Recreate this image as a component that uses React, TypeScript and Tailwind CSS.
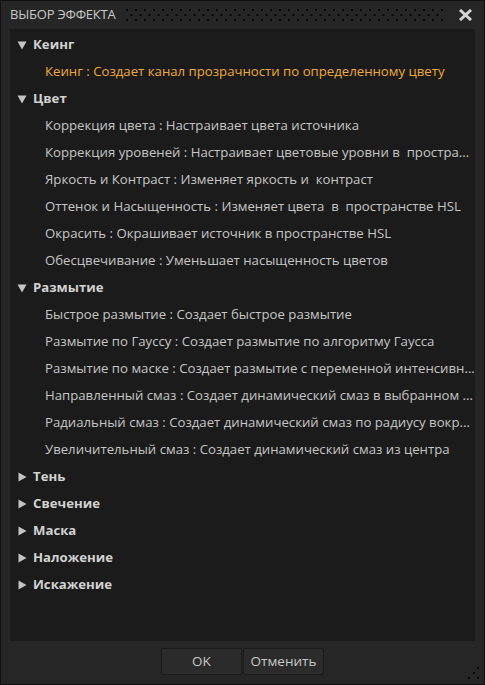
import React from "react";

type Cat = { name: string; open: boolean; items: string[] };

const cats: Cat[] = [
  { name: "Кеинг", open: true, items: ["Кеинг : Создает канал прозрачности по определенному цвету"] },
  {
    name: "Цвет",
    open: true,
    items: [
      "Коррекция цвета : Настраивает цвета источника",
      "Коррекция уровеней : Настраивает цветовые уровни в  простра...",
      "Яркость и Контраст : Изменяет яркость и  контраст",
      "Оттенок и Насыщенность : Изменяет цвета  в  пространстве HSL",
      "Окрасить : Окрашивает источник в пространстве HSL",
      "Обесцвечивание : Уменьшает насыщенность цветов",
    ],
  },
  {
    name: "Размытие",
    open: true,
    items: [
      "Быстрое размытие : Создает быстрое размытие",
      "Размытие по Гауссу : Создает размытие по алгоритму Гаусса",
      "Размытие по маске : Создает размытие с переменной интенсивн...",
      "Направленный смаз : Создает динамический смаз в выбранном ...",
      "Радиальный смаз : Создает динамический смаз по радиусу вокр...",
      "Увеличительный смаз : Создает динамический смаз из центра",
    ],
  },
  { name: "Тень", open: false, items: [] },
  { name: "Свечение", open: false, items: [] },
  { name: "Маска", open: false, items: [] },
  { name: "Наложение", open: false, items: [] },
  { name: "Искажение", open: false, items: [] },
];

function Tri({ open }: { open: boolean }) {
  return (
    <svg width="10" height="10" viewBox="0 0 10 10" className="shrink-0">
      {open ? <polygon points="0.5,1.5 9.5,1.5 5,9.5" fill="#c4c4c4" /> : <polygon points="1.5,0.5 9.5,5 1.5,9.5" fill="#c4c4c4" />}
    </svg>
  );
}

const dots: { x: number; y: number }[] = [];
for (let r = 0; r < 3; r++) {
  const off = r === 1 ? 4.5 : 0;
  for (let i = 0; i < 36; i++) {
    const x = i * 9 + off;
    if (x <= 318) dots.push({ x, y: r * 5 });
  }
}

export default function App() {
  return (
    <div
      className="w-[485px] h-[685px] bg-[#262626] border border-[#111] relative flex flex-col"
      style={{ fontFamily: '"Open Sans", "Noto Sans", sans-serif' }}
    >
      <div className="h-[28px] flex items-center pl-[9px] pr-[11px] shrink-0">
        <span className="text-[13px] text-[#c9c9c9] tracking-[-0.2px]">ВЫБОР ЭФФЕКТА</span>
        <svg className="ml-[10px] shrink-0" width="320" height="12" viewBox="0 0 320 12">
          {dots.map((d, i) => (
            <rect key={i} x={d.x} y={d.y} width="2" height="2" fill="#080808" />
          ))}
        </svg>
        <svg width="15" height="12" viewBox="0 0 15 12" className="ml-auto shrink-0">
          <path d="M2 1 L13 11 M13 1 L2 11" stroke="#d4d4d4" strokeWidth="3" />
        </svg>
      </div>
      <div className="mx-[9px] h-[612px] bg-[#1b1b1b] pt-[2px] pl-[7px] text-[13.2px] text-[#c6c6c6]">
        {cats.map((c) => (
          <div key={c.name}>
            <div className="h-[27px] flex items-center gap-[6px] font-bold text-[#d2d2d2]">
              <Tri open={c.open} />
              <span>{c.name}</span>
            </div>
            {c.items.map((it, i) => (
              <div
                key={it}
                className={`h-[27px] flex items-center pl-[28px] whitespace-pre ${
                  c.name === "Кеинг" && i === 0 ? "text-[#f0aa35]" : ""
                }`}
              >
                {it}
              </div>
            ))}
          </div>
        ))}
      </div>
      <div className="flex justify-center gap-[1px] pt-[7px]">
        <button className="w-[81px] h-[27px] bg-[#2b2b2b] border border-[#1a1a1a] rounded-[2px] text-[13.5px] text-[#c9c9c9]">
          OK
        </button>
        <button className="w-[81px] h-[27px] bg-[#2b2b2b] border border-[#1a1a1a] rounded-[2px] text-[13.5px] text-[#c9c9c9]">
          Отменить
        </button>
      </div>
      <svg className="absolute right-[3px] bottom-[3px]" width="14" height="14" viewBox="0 0 14 14">
        <rect x="10" y="0" width="2" height="2" fill="#080808" />
        <rect x="6" y="5" width="2" height="2" fill="#080808" />
        <rect x="1" y="10" width="2" height="2" fill="#080808" />
        <rect x="10" y="10" width="2" height="2" fill="#080808" />
      </svg>
    </div>
  );
}
